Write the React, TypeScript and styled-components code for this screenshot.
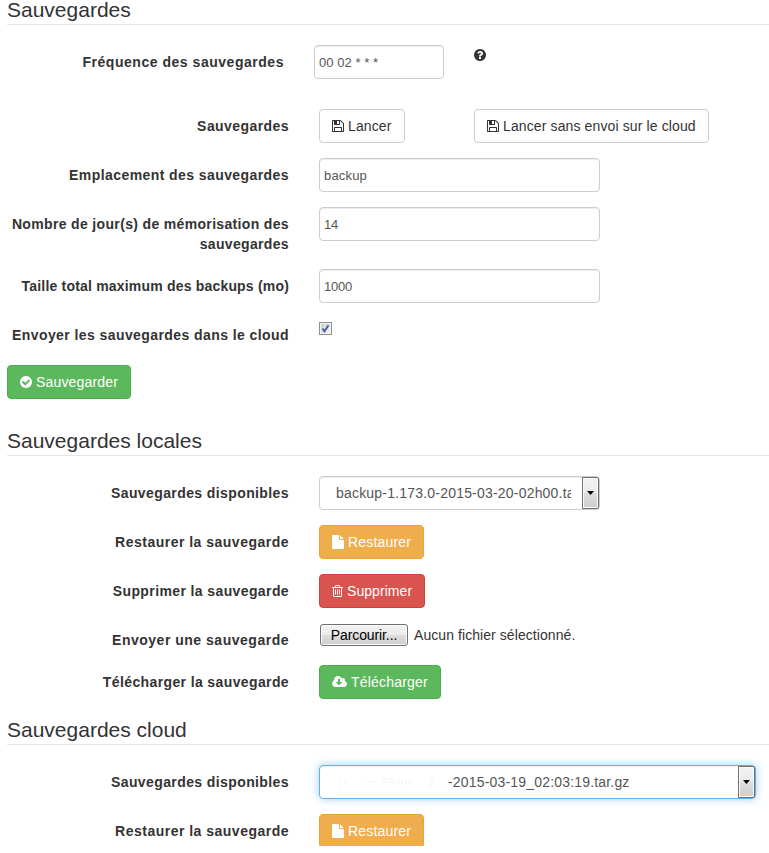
import React from "react";
import styled, { createGlobalStyle, css } from "styled-components";

const GlobalStyle = createGlobalStyle`
  *, *::before, *::after { box-sizing: border-box; }
  body {
    margin: 0;
    background: #fff;
    color: #333;
    font: 14px/20px "Liberation Sans", Arial, sans-serif;
  }
`;

const Page = styled.main`
  height: 846px;
  overflow: hidden;
  padding-left: 7px;
`;

const Shift = styled.div`
  margin-top: -6px;
`;

const Legend = styled.h2<{ $gap?: number }>`
  margin: ${(p) => p.$gap ?? 0}px 0 20px;
  height: 31px;
  border-bottom: 1px solid #e5e5e5;
  font-size: 21px;
  font-weight: 400;
  line-height: 32px;
  color: #333;
`;

const Row = styled.div<{ $h?: number; $gap?: number }>`
  display: flex;
  align-items: flex-start;
  height: ${(p) => p.$h ?? 34}px;
  margin-bottom: ${(p) => p.$gap ?? 15}px;
`;

const Label = styled.label<{ $ls: number; $w?: number }>`
  flex: none;
  width: ${(p) => p.$w ?? 282}px;
  margin-right: 30px;
  padding-top: 7px;
  text-align: right;
  font-weight: 700;
  letter-spacing: ${(p) => p.$ls}px;
`;

const Input = styled.input<{ $w: number; $ls: number }>`
  width: ${(p) => p.$w}px;
  height: 34px;
  padding: 0 4px;
  border: 1px solid #ccc;
  border-radius: 4px;
  outline: 0;
  box-shadow: inset 0 1px 1px rgba(0, 0, 0, 0.075);
  background: #fff;
  color: #555;
  font: 13px/20px "Liberation Sans", Arial, sans-serif;
  letter-spacing: ${(p) => p.$ls}px;
`;

const tones = {
  plain: css`background: #fff; border-color: #ccc; color: #333;`,
  success: css`background: #5cb85c; border-color: #4cae4c; color: #fff;`,
  warning: css`background: #f0ad4e; border-color: #eea236; color: #fff;`,
  danger: css`background: #d9534f; border-color: #d43f3a; color: #fff;`,
};

const Button = styled.button<{ $tone: keyof typeof tones; $w: number; $ls?: number }>`
  display: flex;
  align-items: center;
  flex: none;
  width: ${(p) => p.$w}px;
  height: 34px;
  padding: 0 0 0 12px;
  border: 1px solid;
  border-radius: 4px;
  font: 14px/20px "Liberation Sans", Arial, sans-serif;
  letter-spacing: ${(p) => p.$ls ?? 0.12}px;
  white-space: nowrap;
  ${(p) => tones[p.$tone]}
`;

const Glyph = styled.svg<{ $gap: number }>`
  flex: none;
  display: block;
  height: 14px;
  margin-right: ${(p) => p.$gap}px;
  fill: currentColor;
`;

const HelpSlot = styled.span`
  margin: 3px 0 0 30px;
`;

const CloudLaunch = styled.div`
  margin-left: 69px;
`;

const Check = styled.span`
  display: grid;
  place-items: center;
  width: 13px;
  height: 13px;
  margin-top: 4px;
  border: 1px solid #8e8f8f;
  background: linear-gradient(135deg, #cbcfd5, #f6f6f6) content-box, #f4f4f4;
  padding: 1px;
`;

const Select = styled.div<{ $w: number; $focus?: boolean }>`
  display: flex;
  align-items: stretch;
  width: ${(p) => p.$w}px;
  height: 34px;
  border: 1px solid ${(p) => (p.$focus ? "#66afe9" : "#ccc")};
  border-radius: 4px;
  box-shadow: inset 0 1px 1px rgba(0, 0, 0, 0.075)
    ${(p) => (p.$focus ? ", 0 0 8px rgba(102, 175, 233, 0.6)" : "")};
  color: #555;
`;

const SelectValue = styled.span<{ $ls: number }>`
  display: flex;
  align-items: center;
  flex: 1;
  min-width: 0;
  overflow: hidden;
  margin: 0 11px 0 16px;
  line-height: 32px;
  letter-spacing: ${(p) => p.$ls}px;
  white-space: nowrap;
`;

const Arrow = styled.span`
  display: grid;
  place-items: center;
  flex: none;
  width: 17px;
  border: 1px solid #707070;
  border-radius: 0 2px 2px 0;
  box-shadow: inset 0 0 0 1px #fbfbfb;
  background: linear-gradient(#f2f2f2 0%, #ebebeb 50%, #dddddd 50%, #cfcfcf 100%);
`;

const Residue = styled.svg`
  flex: none;
  width: 112px;
  height: 16px;
  stroke: #f1f1f1;
  fill: none;
`;

const Browse = styled.button`
  width: 88px;
  height: 22px;
  margin: 1px 6px 0 1px;
  padding: 0;
  border: 1px solid #707070;
  border-radius: 3px;
  box-shadow: inset 0 0 0 1px #fbfbfb;
  background: linear-gradient(#f2f2f2 0%, #ebebeb 50%, #dddddd 50%, #cfcfcf 100%);
  color: #000;
  font: 14px/19px "Liberation Sans", Arial, sans-serif;
  letter-spacing: -0.1px;
`;

const FileName = styled.span`
  margin-top: 2px;
  letter-spacing: 0.07px;
`;

const circle =
  "m252 162q0 209-103 385.5t-279.5 279.5-385.5 103-385.5-103-279.5-279.5-103-385.5 103-385.5 279.5-279.5 385.5-103 385.5 103 279.5 279.5 103 385.5z";
const bar = "v576q0 14-9 23t-23 9h-64q-14 0-23-9t-9-23v-576q0-14 9-23t23-9h64q14 0 23 9t9 23z";

const icons = {
  save: {
    box: [128, 1536],
    d: "M512 1536h768v-384h-768v384zm896 0h128v-896q0-14-10-38.5t-20-34.5l-281-281q-10-10-34-20t-39-10v416q0 40-28 68t-68 28h-576q-40 0-68-28t-28-68v-416h-128v1280h128v-416q0-40 28-68t68-28h832q40 0 68 28t28 68v416zm-384-928v-320q0-13-9.5-22.5t-22.5-9.5h-192q-13 0-22.5 9.5t-9.5 22.5v320q0 13 9.5 22.5t22.5 9.5h192q13 0 22.5-9.5t9.5-22.5zm640 32v928q0 40-28 68t-68 28h-1344q-40 0-68-28t-28-68v-1344q0-40 28-68t68-28h928q40 0 88 20t76 48l280 280q28 28 48 76t20 88z",
  },
  check: {
    box: [128, 1536],
    d: "M1412 734q0-28-18-46l-91-90q-19-19-45-19t-45 19l-408 407-226-226q-19-19-45-19t-45 19l-91 90q-18 18-18 46 0 27 18 45l362 362q19 19 45 19 27 0 46-19l543-543q18-18 18-45z" + circle,
  },
  help: {
    box: [128, 1536],
    d: "M1024 1376v-192q0-14-9-23t-23-9h-192q-14 0-23 9t-9 23v192q0 14 9 23t23 9h192q14 0 23-9t9-23zm256-672q0-88-55.5-163t-138.5-116-170-41q-243 0-371 213-15 24 8 42l132 100q7 6 19 6 16 0 25-12 53-68 86-92 34-24 86-24 48 0 85.5 26t37.5 59q0 38-20 61t-68 45q-63 28-115.5 86.5t-52.5 125.5v36q0 14 9 23t23 9h192q14 0 23-9t9-23q0-19 21.5-49.5t54.5-49.5q32-18 49-28.5t46-35 44.5-48 28-60.5 12.5-81zm384 192q0 209-103 385.5t-279.5 279.5-385.5 103-385.5-103-279.5-279.5-103-385.5 103-385.5 279.5-279.5 385.5-103 385.5 103 279.5 279.5 103 385.5z",
  },
  trash: {
    box: [192, 1408],
    d: `M704 736${bar}M960 736${bar}M1216 736${bar}M1344 1460v-948h-896v948q0 22 7 40.5t14.5 27 10.5 8.5h832q3 0 10.5-8.5t14.5-27 7-40.5zm-672-1076h448l-48-117q-7-9-17-11h-317q-10 2-17 11zm928 32v64q0 14-9 23t-23 9h-96v948q0 83-47 143.5t-113 60.5h-832q-66 0-113-58.5t-47-141.5v-952h-96q-14 0-23-9t-9-23v-64q0-14 9-23t23-9h309l70-167q15-37 54-63t79-26h320q40 0 79 26t54 63l70 167h309q14 0 23 9t9 23z`,
  },
  file: {
    box: [128, 1536],
    d: "M1152 512v-472q22 14 36 28l408 408q14 14 28 36h-472zm-128 32q0 40 28 68t68 28h544v1056q0 40-28 68t-68 28h-1344q-40 0-68-28t-28-68v-1600q0-40 28-68t68-28h800v544z",
  },
  cloud: {
    box: [-64, 1920],
    d: "M1216 928q0-14-9-23t-23-9h-224v-352q0-13-9.5-22.5t-22.5-9.5h-192q-13 0-22.5 9.5t-9.5 22.5v352h-224q-13 0-22.5 9.5t-9.5 22.5q0 14 9 23l352 352q9 9 23 9t23-9l351-351q10-12 10-24zm640 224q0 159-112.5 271.5t-271.5 112.5h-1088q-185 0-316.5-131.5t-131.5-316.5q0-130 70-240t188-165q-2-30-2-43 0-212 150-362t362-150q156 0 285.5 87t188.5 231q71-62 166-62 106 0 181 75t75 181q0 76-41 138 130 31 213.5 135.5t83.5 238.5z",
  },
};

function Icon({ name, gap = 4 }: { name: keyof typeof icons; gap?: number }) {
  const { box, d } = icons[name];
  return (
    <Glyph $gap={gap} width={box[1] / 128} viewBox={`${box[0]} 0 ${box[1]} 1792`} aria-hidden>
      <path d={d} />
    </Glyph>
  );
}

function DropArrow() {
  return (
    <Arrow>
      <svg width="7" height="4" viewBox="0 0 7 4">
        <path d="M0 0h7L3.5 4z" fill="#000" />
      </svg>
    </Arrow>
  );
}

export default function App() {
  return (
    <>
      <GlobalStyle />
      <Page>
        <Shift>
          <Legend>Sauvegardes</Legend>
          <Row $gap={30}>
            <Label $ls={0.53} $w={277}>Fréquence des sauvegardes</Label>
            <Input $w={130} $ls={0.05} defaultValue="00 02 * * *" />
            <HelpSlot><Icon name="help" /></HelpSlot>
          </Row>
          <Row>
            <Label $ls={0.43}>Sauvegardes</Label>
            <Button $tone="plain" $w={86}><Icon name="save" />Lancer</Button>
            <CloudLaunch>
              <Button $tone="plain" $w={235}><Icon name="save" />Lancer sans envoi sur le cloud</Button>
            </CloudLaunch>
          </Row>
          <Row>
            <Label $ls={0.42}>Emplacement des sauvegardes</Label>
            <Input $w={281} $ls={0.18} defaultValue="backup" />
          </Row>
          <Row $h={47}>
            <Label $ls={0.34}>Nombre de jour(s) de mémorisation des sauvegardes</Label>
            <Input $w={281} $ls={-0.2} defaultValue="14" />
          </Row>
          <Row>
            <Label $ls={0.19}>Taille total maximum des backups (mo)</Label>
            <Input $w={281} $ls={-0.2} defaultValue="1000" />
          </Row>
          <Row $h={27} $gap={20}>
            <Label $ls={0.42}>Envoyer les sauvegardes dans le cloud</Label>
            <Check role="checkbox" aria-checked>
              <svg width="9" height="9" viewBox="0 0 9 9">
                <path d="M1.5 4.5L3.5 7.3L7.5 1.3" fill="none" stroke="#4a5f97" strokeWidth="1.9" />
              </svg>
            </Check>
          </Row>
          <Button $tone="success" $w={124} $ls={0.17}><Icon name="check" />Sauvegarder</Button>

          <Legend $gap={26}>Sauvegardes locales</Legend>
          <Row>
            <Label $ls={0.4}>Sauvegardes disponibles</Label>
            <Select $w={281}>
              <SelectValue $ls={0.2}>backup-1.173.0-2015-03-20-02h00.tar.gz</SelectValue>
              <DropArrow />
            </Select>
          </Row>
          <Row>
            <Label $ls={0.49}>Restaurer la sauvegarde</Label>
            <Button $tone="warning" $w={105} $ls={0.17}><Icon name="file" />Restaurer</Button>
          </Row>
          <Row>
            <Label $ls={0.39}>Supprimer la sauvegarde</Label>
            <Button $tone="danger" $w={106} $ls={0.06}><Icon name="trash" />Supprimer</Button>
          </Row>
          <Row $h={27}>
            <Label $ls={0.51}>Envoyer une sauvegarde</Label>
            <Browse>Parcourir...</Browse>
            <FileName>Aucun fichier sélectionné.</FileName>
          </Row>
          <Row>
            <Label $ls={0.38}>Télécharger la sauvegarde</Label>
            <Button $tone="success" $w={122} $ls={0.2}><Icon name="cloud" />Télécharger</Button>
          </Row>

          <Legend>Sauvegardes cloud</Legend>
          <Row>
            <Label $ls={0.4}>Sauvegardes disponibles</Label>
            <Select $w={437} $focus>
              <SelectValue $ls={0.18}>
                <Residue viewBox="0 0 112 16" aria-hidden>
                  <path d="M4 8v4M8 8h3M14 11h1M26 8h2M34 8h7M46 8h5M53 8h6M46 5h5M53 5h6M62 6v5M66 6v5M70 6v5M74 6v5M92 4h4v8h-4" />
                </Residue>
                -2015-03-19_02:03:19.tar.gz
              </SelectValue>
              <DropArrow />
            </Select>
          </Row>
          <Row>
            <Label $ls={0.49}>Restaurer la sauvegarde</Label>
            <Button $tone="warning" $w={105} $ls={0.17}><Icon name="file" />Restaurer</Button>
          </Row>
        </Shift>
      </Page>
    </>
  );
}
